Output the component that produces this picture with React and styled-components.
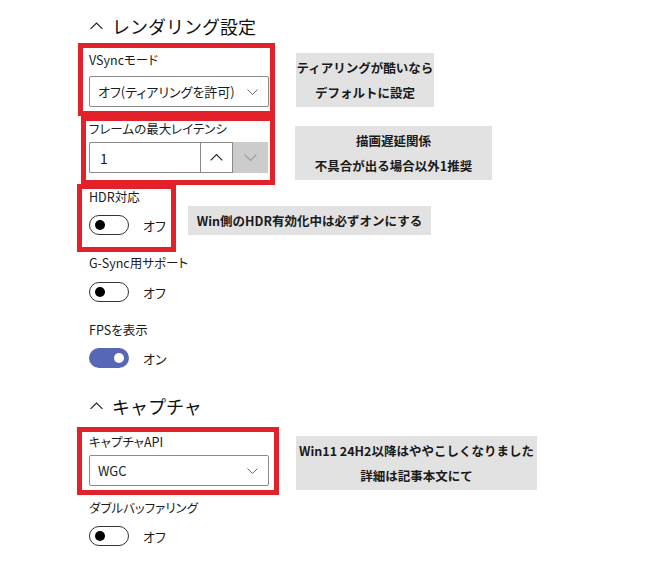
import React from 'react';
import styled, { createGlobalStyle } from 'styled-components';

const GlobalStyle = createGlobalStyle`
  body {
    margin: 0;
    background: #ffffff;
    font-family: "Noto Sans CJK JP", "Noto Sans", sans-serif;
    color: #1b1b1b;
  }
`;

const Page = styled.div`
  display: flex;
  flex-direction: column;
  width: 649px;
  height: 567px;
  box-sizing: border-box;
  padding: 12px 0 0 77px;
  overflow: hidden;
`;

const SectionHeader = styled.div`
  display: flex;
  align-items: center;
  gap: 9px;
  height: 28px;
  padding-left: 13px;
  margin-top: ${(p) => p.$mt || 0}px;
  font-size: 18px;
  color: #111;
`;

const Row = styled.div`
  display: flex;
  align-items: center;
  gap: ${(p) => p.$gap || 0}px;
  margin-top: ${(p) => p.$mt || 0}px;
`;

const Frame = styled.div`
  box-sizing: border-box;
  width: ${(p) => p.$w}px;
  margin-left: ${(p) => p.$ml || 0}px;
  padding: ${(p) => p.$pad};
  border: 5px solid #e3212a;
  display: flex;
  flex-direction: column;
  flex-shrink: 0;
`;

const Setting = styled.div`
  display: flex;
  flex-direction: column;
  padding-left: 12px;
  margin-top: ${(p) => p.$mt || 0}px;
`;

const Label = styled.div`
  font-size: 12.5px;
  line-height: ${(p) => p.$lh || 20}px;
  font-feature-settings: "palt";
  color: #1b1b1b;
  white-space: nowrap;
`;

const Select = styled.div`
  box-sizing: border-box;
  display: flex;
  align-items: center;
  justify-content: space-between;
  width: 180px;
  height: 31px;
  margin-top: ${(p) => p.$mt || 0}px;
  padding: 0 10px 0 8px;
  border: 1px solid #8a8a8a;
  border-radius: 2px;
  font-size: 13px;
  font-feature-settings: "palt";
  color: #1b1b1b;
  white-space: nowrap;
`;

const Spinner = styled.div`
  display: flex;
  height: 31px;
  margin-top: ${(p) => p.$mt || 0}px;
`;

const SpinInput = styled.div`
  box-sizing: border-box;
  display: flex;
  align-items: center;
  width: 111px;
  padding-left: 10px;
  border: 1px solid #8a8a8a;
  border-right: none;
  border-radius: 2px 0 0 2px;
  font-size: 14px;
`;

const SpinButton = styled.div`
  box-sizing: border-box;
  display: flex;
  align-items: center;
  justify-content: center;
  width: ${(p) => p.$w}px;
  background: ${(p) => (p.$disabled ? '#cccccc' : '#ffffff')};
  border: ${(p) => (p.$disabled ? 'none' : '1px solid #8a8a8a')};
`;

const ToggleRow = styled.div`
  display: flex;
  align-items: center;
  gap: 14px;
  height: 20px;
  margin-top: ${(p) => p.$mt || 0}px;
  font-size: 13px;
  font-feature-settings: "palt";
`;

const Track = styled.div`
  box-sizing: border-box;
  position: relative;
  width: 40px;
  height: 20px;
  border-radius: 10px;
  border: ${(p) => (p.$on ? 'none' : '1.5px solid #333')};
  background: ${(p) => (p.$on ? '#5667b6' : '#ffffff')};
`;

const Knob = styled.div`
  position: absolute;
  top: 50%;
  left: ${(p) => (p.$on ? '25px' : '5px')};
  width: 10px;
  height: 10px;
  margin-top: -5px;
  border-radius: 50%;
  background: ${(p) => (p.$on ? '#ffffff' : '#000000')};
`;

const Note = styled.div`
  box-sizing: border-box;
  width: ${(p) => p.$w}px;
  padding: 2px 0;
  margin-top: ${(p) => p.$mt || 0}px;
  background: #e2e2e2;
  font-size: 12.5px;
  font-weight: 700;
  line-height: 25px;
  text-align: center;
  color: #1a1a1a;
  white-space: nowrap;
`;

const Chevron = ({ up, color = '#6a6a6a', w = 11, h = 6 }) => (
  <svg width={w} height={h} viewBox="0 0 11 6" fill="none">
    <path
      d={up ? 'M0.5 5.5 L5.5 0.5 L10.5 5.5' : 'M0.5 0.5 L5.5 5.5 L10.5 0.5'}
      stroke={color}
      strokeWidth="1"
    />
  </svg>
);

const Toggle = ({ on, mt }) => (
  <ToggleRow $mt={mt}>
    <Track $on={on}>
      <Knob $on={on} />
    </Track>
    {on ? 'オン' : 'オフ'}
  </ToggleRow>
);

const App = () => (
  <>
    <GlobalStyle />
    <Page>
      <SectionHeader>
        <Chevron up color="#222" w={13} h={8} />
        レンダリング設定
      </SectionHeader>

      <Row $mt={3} $gap={21}>
        <Frame $w={197} $ml={1} $pad="2px 1px 4px 6px">
          <Label>VSyncモード</Label>
          <Select $mt={6}>
            オフ(ティアリングを許可)
            <Chevron />
          </Select>
        </Frame>
        <Note $w={138}>
          ティアリングが酷いなら
          <br />
          デフォルトに設定
        </Note>
      </Row>

      <Row $gap={20}>
        <Frame $w={194} $ml={4} $pad="0 0 7px 3px">
          <Label $lh={16}>フレームの最大レイテンシ</Label>
          <Spinner $mt={5}>
            <SpinInput>1</SpinInput>
            <SpinButton $w={33}>
              <Chevron up color="#222" w={13} h={7} />
            </SpinButton>
            <SpinButton $w={35} $disabled>
              <Chevron color="#9a9a9a" w={13} h={7} />
            </SpinButton>
          </Spinner>
        </Frame>
        <Note $w={197} $mt={5}>
          描画遅延関係
          <br />
          不具合が出る場合以外1推奨
        </Note>
      </Row>

      <Row $mt={-1} $gap={12}>
        <Frame $w={99} $pad="0 0 12px 7px">
          <Label $lh={16}>HDR対応</Label>
          <Toggle mt={10} />
        </Frame>
        <Note $w={243} $mt={4}>
          Win側のHDR有効化中は必ずオンにする
        </Note>
      </Row>

      <Setting $mt={1}>
        <Label>G-Sync用サポート</Label>
        <Toggle mt={9} />
      </Setting>

      <Setting $mt={18}>
        <Label>FPSを表示</Label>
        <Toggle on mt={8} />
      </Setting>

      <SectionHeader $mt={24}>
        <Chevron up color="#222" w={13} h={8} />
        キャプチャ
      </SectionHeader>

      <Row $mt={7} $gap={17}>
        <Frame $w={202} $pad="0 0 4px 7px">
          <Label>キャプチャAPI</Label>
          <Select $mt={3}>
            WGC
            <Chevron />
          </Select>
        </Frame>
        <Note $w={241} $mt={4}>
          Win11 24H2以降はややこしくなりました
          <br />
          詳細は記事本文にて
        </Note>
      </Row>

      <Setting $mt={3}>
        <Label>ダブルバッファリング</Label>
        <Toggle mt={8} />
      </Setting>
    </Page>
  </>
);

export default App;
